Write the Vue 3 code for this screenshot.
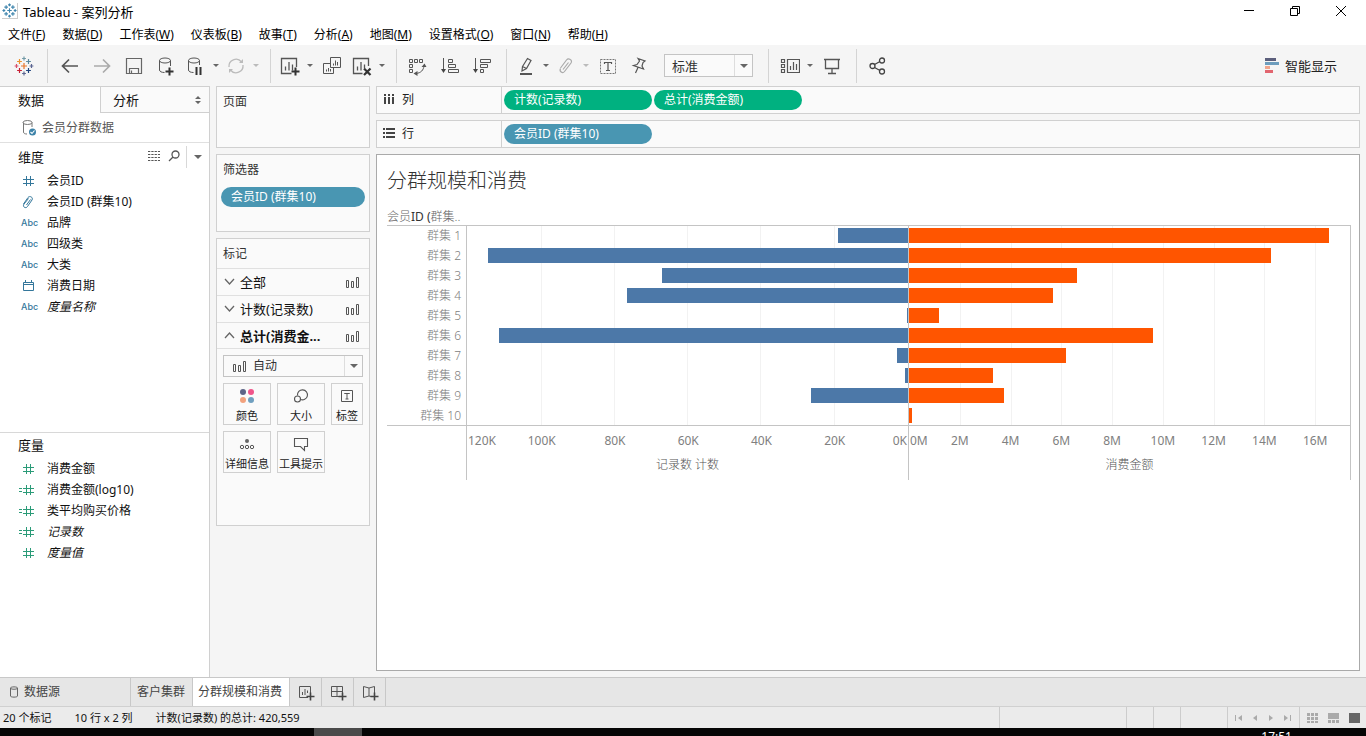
<script setup>
import { ref } from 'vue'

const menus = [
  ['文件', 'F'], ['数据', 'D'], ['工作表', 'W'], ['仪表板', 'B'], ['故事', 'T'],
  ['分析', 'A'], ['地图', 'M'], ['设置格式', 'O'], ['窗口', 'N'], ['帮助', 'H'],
]

// Tableau mark: a set of plus signs, [x, y, arm, colour]
const plusPath = (x, y, r) => `M${x - r} ${y}H${x + r}M${x} ${y - r}V${y + r}`
const pluses = [
  [10, 10, 3, '#e8762b'], [5.5, 5.5, 2.4, '#eb912c'], [14.5, 5.5, 2.4, '#59879b'],
  [5.5, 14.5, 2.4, '#c72035'], [14.5, 14.5, 2.4, '#1f447e'], [10, 2.5, 1.9, '#7199a6'],
  [10, 17.5, 1.9, '#5b6591'], [2.5, 10, 1.9, '#d9506a'], [17.5, 10, 1.9, '#5b6591'],
]

const stroke = (body, color = '#555', width = 1) =>
  `<g fill="none" stroke="${color}" stroke-width="${width}">${body}</g>`

const icons = {
  back: stroke('<path d="M18 10H3M9 3.500L2.500 10L9 16.500"/>', '#555', 1.7),
  forward: stroke('<path d="M2 10H17M11 3.500L17.500 10L11 16.500"/>', '#aaa', 1.7),
  save: stroke('<path d="M2.500 2.500H17.500V17.500H2.500ZM5.500 17.500V12.500H14.500V17.500M7.500 14.500V17.500"/>', '#666', 1.2),
  addData: stroke('<ellipse cx="9" cy="4.500" rx="5.500" ry="2.500"/><path d="M3.500 4.500V14C3.500 15.500 5.500 16.500 8.500 16.500M14.500 4.500V10"/>') + stroke('<path d="M9.500 15.500H17.500M13.500 11.500V19.500"/>', '#333', 2),
  pauseData: stroke('<ellipse cx="8" cy="4.500" rx="5.500" ry="2.500"/><path d="M2.500 4.500V14C2.500 15.500 4.500 16.500 7.500 16.500M13.500 4.500V9"/>') + stroke('<path d="M10.500 11V19M14.500 11V19"/>', '#333', 2),
  refresh: stroke('<path d="M3 11A7 7 0 0 1 15.500 6M17 9A7 7 0 0 1 4.500 14"/>', '#bbb', 1.3) + '<path fill="#bbb" d="M13 7H17V3ZM7 13H3V17Z"/>',
  newSheet: stroke('<path d="M11.500 17.500H1.500V2.500H16.500V11M5.500 14.500V10.500M9 14.500V6M12.500 14.500V8.500" stroke-width="1.300"/>') + stroke('<path d="M11.500 15.500H19.500M15.500 11.500V19.500"/>', '#333', 2),
  dupSheet: stroke('<path d="M8.500 1.500H18.500V11.500H8.500ZM8 7.500H1.500V17.500H11.500V12M11.500 9.500V7.500M13.500 9.500V4.500M15.500 9.500V6M4.500 15.500V13.500M6.500 15.500V12M8.500 15.500V13"/>'),
  clearSheet: stroke('<path d="M10.500 17.500H1.500V2.500H16.500V10M5.500 14.500V10.500M9 14.500V6M12.500 12V8.500" stroke-width="1.300"/>') + stroke('<path d="M12 12.500L18.500 19M18.500 12.500L12 19"/>', '#333', 2.2),
  swap: stroke('<path d="M1.500 3.500H4.500V6.500H1.500ZM6.500 3.500H9.500V6.500H6.500ZM11.500 3.500H14.500V6.500H11.500ZM1.500 8.500H4.500V11.500H1.500ZM1.500 13.500H4.500V16.500H1.500ZM8 17.500C13 17 15.500 14 16 10"/>') + '<path fill="#555" d="M5.500 17.500L9.500 15V20ZM16.500 7.500L13.500 11H18.500Z"/>',
  sortAsc: stroke('<path d="M3.500 2V15M8.500 3.500H12.500V6.500H8.500ZM8.500 8.500H15.500V11.500H8.500ZM8.500 13.500H18.500V16.500H8.500Z"/>') + '<path fill="#444" d="M1 13H6L3.500 17Z"/>',
  sortDesc: stroke('<path d="M3.500 2V15M8.500 3.500H18.500V6.500H8.500ZM8.500 8.500H15.500V11.500H8.500ZM8.500 13.500H11.500V16.500H8.500Z"/>') + '<path fill="#444" d="M1 13H6L3.500 17Z"/>',
  highlight: stroke('<path d="M6.500 10.500L11.500 2.500L15 4.500L10.500 12.500L6 15ZM6.500 10.500L10.500 12.500"/>', '#555', 1.2) + '<path fill="#555" d="M4 17H16V19H4Z"/>',
  clip: stroke('<path d="M4.500 12L10.500 4C12.500 1.500 17 4 15 7L8.500 15.500C6.500 18 3 15.500 4.500 12.500M7 13.500L12.500 6.500"/>', '#aaa', 1.2),
  label: stroke('<path d="M2.500 3.500H17.500V17.500H2.500Z" stroke-dasharray="2 1"/>', '#777') + stroke('<path d="M6.500 8V6.500H13.500V8M10 6.500V14.500M8 14.500H12"/>', '#555', 1.2),
  pin: stroke('<path d="M8 2.500L15 5L13 6.500L12 10L13.500 13L3.500 9.500L7 8.500L9.500 5ZM8 11.500L5.500 17"/>', '#555', 1.2),
  cards: stroke('<path d="M1.500 3.500H4.500V6.500H1.500ZM1.500 8.500H4.500V11.500H1.500ZM1.500 13.500H4.500V16.500H1.500ZM7.500 3.500H19.500V16.500H7.500ZM10.500 14V10M13.500 14V6M16.500 14V8" stroke-width="1.200"/>'),
  present: stroke('<path d="M2 3.500H18M3.500 3.500V12.500H16.500V3.500M10 12.500V17.500M6 17.500H14"/>', '#555', 1.3),
  share: stroke('<circle cx="4.500" cy="10" r="2.500"/><circle cx="14" cy="4.500" r="2.500"/><circle cx="14" cy="15.500" r="2.500"/><path d="M6.500 8.500L12 5.500M6.500 11.500L12 14.500"/>', '#444', 1.3),
  showMe: '<path fill="#5c5f7c" d="M3 2H14V5H3Z"/><path fill="#6d9dbd" d="M3 6H17V9H3Z"/><path fill="#f0a58c" d="M3 10H8V13H3Z"/><path fill="#e2656f" d="M3 14H11V17H3Z"/>',
  source: stroke('<ellipse cx="9.500" cy="4.500" rx="4.500" ry="2"/><path d="M5.500 4.500V14C5.500 15.500 7 16 9 16M14 4.500V9"/>', '#777') + '<circle cx="14.500" cy="14" r="3.500" fill="#3c82a8"/>' + stroke('<path d="M12.500 14L14 15.500L16.500 12.500"/>', '#fff', 1.1),
  list: '<path stroke="#555" stroke-dasharray="2.300 1" d="M4 4.500H16M4 7.500H16M4 10.500H16M4 13.500H16"/>',
  search: stroke('<circle cx="11.500" cy="7.500" r="3.500"/><path d="M9 10L5 14"/>', '#555', 1.3),
  num: stroke('<path d="M8.500 5V15M12.500 5V15M5 8.500H16M5 12.500H16"/>', 'currentColor'),
  calc: stroke('<path d="M8.500 5V15M12.500 5V15M5 8.500H16M5 12.500H16M1 8.500H4M1 11.500H4"/>', 'currentColor'),
  group: stroke('<path d="M5.500 12L10 5.500C11.500 3.500 15.500 5 14 8L9.500 14.500C8 17 4 15 6 12L10.500 6.500M8.500 13L12.500 7.500"/>', 'currentColor'),
  date: stroke('<path d="M5.500 6.500H15.500V14.500H5.500ZM5.500 8.500H15.500M7.500 4V6.500M13.500 4V6.500"/>', 'currentColor'),
  bar: stroke('<path d="M3.500 8.500H5.500V15.500H3.500ZM8.500 9.500H10.500V15.500H8.500ZM13.500 5.500H15.500V15.500H13.500Z"/>'),
  down: stroke('<path d="M6 7L10.500 12L15 7"/>', '#666', 1.3),
  up: stroke('<path d="M6 12L10.500 7L15 12"/>', '#666', 1.3),
  color: '<circle cx="6" cy="6" r="3" fill="#5d6487"/><circle cx="14" cy="6" r="3" fill="#f0558a"/><circle cx="6" cy="14" r="3" fill="#f2a27e"/><circle cx="14" cy="14" r="3" fill="#6f9fbf"/>',
  size: stroke('<path d="M6.500 9.500A5 5 0 1 1 9.500 13.500"/><circle cx="6.500" cy="13" r="3"/>', '#555', 1.1),
  text: stroke('<path d="M4.500 4.500H15.500V15.500H4.500ZM7.500 8V7.500H12.500V8M10 7.500V13M8.500 13H11.500"/>'),
  detail: '<circle cx="10" cy="7" r="2" fill="#666"/>' + stroke('<circle cx="5" cy="13" r="1.700"/><circle cx="10" cy="13" r="1.700"/><circle cx="15" cy="13" r="1.700"/>'),
  tooltip: stroke('<path d="M3.500 4.500H16.500V12.500H13.500V16.500L9.500 12.500H3.500Z"/>', '#555', 1.1),
  cols: '<path fill="#444" d="M5 4h2v2h-2zM5 7h2v7h-2zM9 4h2v2h-2zM9 7h2v7h-2zM13 4h2v2h-2zM13 7h2v7h-2z"/>',
  rows: '<path fill="#444" d="M4 4h2v2h-2zM7 4h9v2h-9zM4 8h2v2h-2zM7 8h9v2h-9zM4 12h2v2h-2zM7 12h9v2h-9z"/>',
  db: stroke('<path d="M6.500 6C6.500 4.500 13.500 4.500 13.500 6V14C13.500 15.500 6.500 15.500 6.500 14ZM6.500 6.500C8 7.500 12 7.500 13.500 6.500"/>', '#666'),
  tabSheet: stroke('<path d="M12 15.500H3.500V4.500H14.500V11M6.500 13V10M9 13V7M11.500 11V8.500"/>') + stroke('<path d="M10.500 14.500H18.500M14.500 10.500V18.500"/>', '#444', 1.6),
  tabDash: stroke('<path d="M12 14.500H3.500V4.500H14.500V11M9 4.500V14.500M3.500 9.500H14.500"/>') + stroke('<path d="M10.500 14.500H18.500M14.500 10.500V18.500"/>', '#444', 1.6),
  tabStory: stroke('<path d="M11 14.500L9 14L3.500 15.500V4.500L9 6L14.500 4.500V11M9 6V14"/>') + stroke('<path d="M10.500 14.500H18.500M14.500 10.500V18.500"/>', '#444', 1.6),
  first: '<path fill="#aaa" d="M6 7h1v6h-1zM13 7v6l-4 -3z"/>',
  prev: '<path fill="#aaa" d="M12 7v6l-4 -3z"/>',
  next: '<path fill="#aaa" d="M8 7v6l4 -3z"/>',
  last: '<path fill="#aaa" d="M13 7h1v6h-1zM7 7v6l4 -3z"/>',
  grid: '<path fill="#aaa" d="M4 5h3v3h-3zM8 5h3v3h-3zM12 5h3v3h-3zM4 9h3v3h-3zM8 9h3v3h-3zM12 9h3v3h-3zM4 13h3v2h-3zM8 13h3v2h-3zM12 13h3v2h-3z"/>',
  film: '<path fill="#aaa" d="M4 5h11v6h-11zM4 12h3v3h-3zM8 12h3v3h-3zM12 12h3v3h-3z"/>',
  full: '<path fill="#666" d="M4 5h11v10h-11z"/>',
}

const tools = [
  { i: 'back', t: '撤消' }, { i: 'forward', t: '重做' }, { i: 'save', t: '保存' }, { i: 'addData', t: '新建数据源' },
  { i: 'pauseData', t: '暂停自动更新', c: 1 }, { i: 'refresh', t: '运行更新', c: 1, off: 1 }, { sep: 1 },
  { i: 'newSheet', t: '新建工作表', c: 1 }, { i: 'dupSheet', t: '复制' }, { i: 'clearSheet', t: '清除工作表', c: 1 }, { sep: 1 },
  { i: 'swap', t: '交换行和列' }, { i: 'sortAsc', t: '升序' }, { i: 'sortDesc', t: '降序' }, { sep: 1 },
  { i: 'highlight', t: '突出显示', c: 1 }, { i: 'clip', t: '组成员', c: 1, off: 1 }, { i: 'label', t: '显示标记标签' }, { i: 'pin', t: '固定轴' },
]
const fit = ref('标准')
const mark = ref('自动')

const dimensions = [
  { i: 'num', n: '会员ID' }, { i: 'group', n: '会员ID (群集10)' }, { n: '品牌' }, { n: '四级类' },
  { n: '大类' }, { i: 'date', n: '消费日期' }, { n: '度量名称', em: 1 },
]
const measures = [
  { i: 'num', n: '消费金额' }, { i: 'calc', n: '消费金额(log10)' }, { i: 'calc', n: '类平均购买价格' },
  { i: 'calc', n: '记录数', em: 1 }, { i: 'num', n: '度量值', em: 1 },
]
const marks = [
  { i: 'color', n: '颜色' }, { i: 'size', n: '大小' }, { i: 'text', n: '标签' },
  { i: 'detail', n: '详细信息' }, { i: 'tooltip', n: '工具提示' },
]

const counts = [19.1, 114.8, 67.1, 76.7, 0.4, 111.6, 3, 0.9, 26.5, 0]
const sales = [16.54, 14.26, 6.63, 5.68, 1.2, 9.62, 6.17, 3.3, 3.73, 0.1]
const countMax = 120.4
const salesMax = 17.37
const countTicks = [100, 80, 60, 40, 20]
const salesTicks = [2, 4, 6, 8, 10, 12, 14, 16]
const pct = (v, max) => `${(v / max) * 100}%`
</script>

<template>
  <div class="app">
    <header class="titlebar">
      <svg class="winlogo" viewBox="0 0 20 20" width="16" height="16">
        <path v-for="(p, k) in pluses" :key="k" :d="plusPath(p[0], p[1], p[2])" stroke="#3f85ad" stroke-width="1.500" />
      </svg>
      <h1>Tableau - 案列分析</h1>
      <div class="wincontrols">
        <button aria-label="最小化"><svg viewBox="0 0 12 12" width="12" height="12"><path d="M1 5.500H11" stroke="#000" /></svg></button>
        <button aria-label="还原"><svg viewBox="0 0 12 12" width="12" height="12"><path d="M1.500 3.500H8.500V10.500H1.500ZM3.500 3.500V1.500H10.500V8.500H8.500" fill="none" stroke="#000" /></svg></button>
        <button aria-label="关闭"><svg viewBox="0 0 12 12" width="12" height="12"><path d="M1 1L11 11M11 1L1 11" stroke="#000" /></svg></button>
      </div>
    </header>

    <nav class="menubar">
      <button v-for="m in menus" :key="m[1]">{{ m[0] }}(<u>{{ m[1] }}</u>)</button>
    </nav>

    <div class="toolbar">
      <button class="tool brand" aria-label="开始页面">
        <svg viewBox="0 0 20 20" width="20" height="20">
          <path v-for="(p, k) in pluses" :key="k" :d="plusPath(p[0], p[1], p[2])" :stroke="p[3]" stroke-width="1.200" />
        </svg>
      </button>
      <span class="sep start"></span>
      <template v-for="(t, k) in tools" :key="k">
        <span v-if="t.sep" class="sep"></span>
        <template v-else>
          <button class="tool" :class="{ split: t.c }" :aria-label="t.t"><svg class="ico" viewBox="0 0 20 20" v-html="icons[t.i]"></svg></button>
          <button v-if="t.c" class="caretbtn" :class="{ off: t.off }" :aria-label="t.t + '选项'"><i class="caret"></i></button>
        </template>
      </template>
      <div class="select fit">
        <select v-model="fit" aria-label="适合"><option>标准</option><option>适合宽度</option></select>
        <span class="arrow"><i class="caret big"></i></span>
      </div>
      <span class="sep wide"></span>
      <button class="tool split" aria-label="显示/隐藏卡"><svg class="ico" viewBox="0 0 20 20" v-html="icons.cards"></svg></button>
      <button class="caretbtn" aria-label="卡选项"><i class="caret"></i></button>
      <button class="tool" aria-label="演示模式"><svg class="ico" viewBox="0 0 20 20" v-html="icons.present"></svg></button>
      <span class="sep"></span>
      <button class="tool" aria-label="共享"><svg class="ico" viewBox="0 0 20 20" v-html="icons.share"></svg></button>
      <button class="showme"><svg class="ico" viewBox="0 0 20 20" v-html="icons.showMe"></svg>智能显示</button>
    </div>

    <main class="work">
      <aside class="data">
        <div class="panetabs">
          <button class="on">数据</button>
          <button>分析<svg viewBox="0 0 6 8" width="6" height="8"><path fill="#666" d="M0 3L3 0L6 3ZM0 5L3 8L6 5Z" /></svg></button>
        </div>
        <button class="source"><svg class="ico" viewBox="0 0 20 20" v-html="icons.source"></svg>会员分群数据</button>
        <section class="dims">
          <div class="sechead">
            <h2>维度</h2>
            <button aria-label="查看数据"><svg class="ico" viewBox="0 0 20 20" v-html="icons.list"></svg></button>
            <button aria-label="查找字段"><svg class="ico" viewBox="0 0 20 20" v-html="icons.search"></svg></button>
            <button class="more" aria-label="菜单"><i class="caret big"></i></button>
          </div>
          <ul class="fields blue">
            <li v-for="f in dimensions" :key="f.n">
              <svg v-if="f.i" class="ico" viewBox="0 0 20 20" v-html="icons[f.i]"></svg>
              <b v-else>Abc</b>
              <span :class="{ em: f.em }">{{ f.n }}</span>
            </li>
          </ul>
        </section>
        <section class="meas">
          <div class="sechead"><h2>度量</h2></div>
          <ul class="fields green">
            <li v-for="f in measures" :key="f.n">
              <svg class="ico" viewBox="0 0 20 20" v-html="icons[f.i]"></svg>
              <span :class="{ em: f.em }">{{ f.n }}</span>
            </li>
          </ul>
        </section>
      </aside>

      <aside class="cardcol">
        <section class="card pages"><h3>页面</h3></section>
        <section class="card filters">
          <h3>筛选器</h3>
          <button class="pill">会员ID (群集10)</button>
        </section>
        <section class="card marks">
          <h3>标记</h3>
          <button class="markrow"><svg class="ico" viewBox="0 0 20 20" v-html="icons.down"></svg><span>全部</span><svg class="ico" viewBox="0 0 20 20" v-html="icons.bar"></svg></button>
          <button class="markrow"><svg class="ico" viewBox="0 0 20 20" v-html="icons.down"></svg><span>计数(记录数)</span><svg class="ico" viewBox="0 0 20 20" v-html="icons.bar"></svg></button>
          <button class="markrow cur"><svg class="ico" viewBox="0 0 20 20" v-html="icons.up"></svg><span>总计(消费金...</span><svg class="ico" viewBox="0 0 20 20" v-html="icons.bar"></svg></button>
          <div class="select marktype">
            <svg class="ico" viewBox="0 0 20 20" v-html="icons.bar"></svg>
            <select v-model="mark" aria-label="标记类型"><option>自动</option><option>条形图</option></select>
            <span class="arrow"><i class="caret big"></i></span>
          </div>
          <div class="markgrid">
            <button v-for="m in marks" :key="m.n"><svg class="ico" viewBox="0 0 20 20" v-html="icons[m.i]"></svg><span>{{ m.n }}</span></button>
          </div>
        </section>
      </aside>

      <div class="sheet">
        <div class="shelf">
          <div class="shelfname"><svg class="ico" viewBox="0 0 20 20" v-html="icons.cols"></svg>列</div>
          <button class="pill measure">计数(记录数)</button>
          <button class="pill measure">总计(消费金额)</button>
        </div>
        <div class="shelf">
          <div class="shelfname"><svg class="ico" viewBox="0 0 20 20" v-html="icons.rows"></svg>行</div>
          <button class="pill">会员ID (群集10)</button>
        </div>
        <section class="view">
          <h2>分群规模和消费</h2>
          <p class="rowhead">会员<b>ID (</b>群集..</p>
          <div class="chart">
            <div class="labels">
              <div v-for="n in 10" :key="n">群集 {{ n }}</div>
            </div>
            <div class="plot left">
              <i v-for="t in countTicks" :key="t" class="gl" :style="{ right: pct(t, countMax) }"></i>
              <div v-for="(v, k) in counts" :key="k" class="row"><div class="bar" :style="{ width: pct(v, countMax) }"></div></div>
            </div>
            <div class="plot right">
              <i v-for="t in salesTicks" :key="t" class="gl" :style="{ left: pct(t, salesMax) }"></i>
              <div v-for="(v, k) in sales" :key="k" class="row"><div class="bar" :style="{ width: pct(v, salesMax) }"></div></div>
            </div>
            <div class="corner"></div>
            <div class="axis">
              <div class="ticks">
                <span class="start">120K</span>
                <span v-for="t in countTicks" :key="t" class="mid" :style="{ left: pct(countMax - t, countMax) }">{{ t }}K</span>
                <span class="end">0K</span>
              </div>
              <div class="axtitle">记录数 计数</div>
            </div>
            <div class="axis last">
              <div class="ticks">
                <span class="start">0M</span>
                <span v-for="t in salesTicks" :key="t" class="mid" :style="{ left: pct(t, salesMax) }">{{ t }}M</span>
              </div>
              <div class="axtitle">消费金额</div>
            </div>
          </div>
        </section>
      </div>
    </main>

    <nav class="sheettabs">
      <button class="ds"><svg class="ico" viewBox="0 0 20 20" v-html="icons.db"></svg>数据源</button>
      <button>客户集群</button>
      <button class="on">分群规模和消费</button>
      <button class="add" aria-label="新建工作表"><svg class="ico" viewBox="0 0 20 20" v-html="icons.tabSheet"></svg></button>
      <button class="add" aria-label="新建仪表板"><svg class="ico" viewBox="0 0 20 20" v-html="icons.tabDash"></svg></button>
      <button class="add" aria-label="新建故事"><svg class="ico" viewBox="0 0 20 20" v-html="icons.tabStory"></svg></button>
    </nav>

    <footer class="status">
      <span>20 个标记</span><span>10 行 x 2 列</span><span>计数(记录数) 的总计: 420,559</span>
      <i class="cell first"></i><i class="cell"></i><i class="cell"></i><i class="cell user"></i>
      <div class="pager">
        <button v-for="n in ['first', 'prev', 'next', 'last']" :key="n" :aria-label="n"><svg class="ico" viewBox="0 0 20 20" v-html="icons[n]"></svg></button>
      </div>
      <div class="modes">
        <button v-for="n in ['grid', 'film', 'full']" :key="n" :aria-label="n"><svg class="ico" viewBox="0 0 20 20" v-html="icons[n]"></svg></button>
      </div>
    </footer>
    <div class="taskbar"><i></i><time>17:51</time></div>
  </div>
</template>

<style>
body { margin: 0; }
</style>

<style scoped>
.app {
  display: flex; flex-direction: column; min-height: 100vh; background: #f5f5f5; color: #222;
  font: 12px/16px "Noto Sans", "Noto Sans CJK SC", sans-serif;
}
.app *, .app *::before { box-sizing: border-box; }
button { font: inherit; color: inherit; background: none; border: 0; padding: 0; margin: 0; display: flex; align-items: center; }
h1, h2, h3, p, ul { margin: 0; padding: 0; font-weight: 400; }
ul { list-style: none; }
.ico { width: 20px; height: 20px; flex: none; display: block; }
.caret { width: 0; height: 0; border: 3px solid transparent; border-top: 3px solid #666; border-bottom: 0; }
.caret.big { border-width: 4px 4px 0; }
.off .caret { border-top-color: #bbb; }

.titlebar { display: flex; align-items: center; height: 22px; background: #fff; padding-left: 2px; color: #000; }
.titlebar h1 { flex: 1; font-size: 13px; margin-left: 5px; padding-top: 1px; }
.winlogo { border-right: 1px solid #ccc; border-bottom: 1px solid #ccc; }
.wincontrols { display: flex; padding-right: 2px; }
.wincontrols button { width: 46px; height: 22px; justify-content: center; }

.menubar { display: flex; gap: 17px; height: 23px; padding: 3px 8px 0; background: #fff; color: #000; }
.menubar button { display: block; white-space: nowrap; }

.toolbar { display: flex; align-items: center; height: 41px; }
.tool { width: 32px; height: 32px; justify-content: center; }
.tool.split { width: 28px; }
.tool.brand { width: 31px; margin-left: 8px; }
.caretbtn { width: 12px; height: 32px; justify-content: center; }
.sep { width: 1px; height: 34px; margin: 0 5px 0 8px; background: #d4d4d4; }
.sep.start { margin-right: 6px; }
.sep.wide { margin: 0 7px 0 15px; }
.select { display: flex; align-items: center; height: 23px; border: 1px solid #c4c4c4; background: #fafafa; }
.select select { flex: 1; min-width: 0; height: 100%; appearance: none; border: 0; background: none; padding: 0 7px; font: inherit; color: #333; }
.arrow { width: 18px; height: 100%; display: flex; align-items: center; justify-content: center; border-left: 1px solid #ddd; }
.fit { width: 89px; margin-left: 8px; font-size: 13px; }
.showme { margin: 0 29px 0 auto; gap: 3px; font-size: 13px; }

.work { flex: 1; display: flex; }
.data { width: 210px; display: flex; flex-direction: column; background: #fff; border-right: 1px solid #d0d0d0; border-top: 1px solid #d0d0d0; color: #111; }
.panetabs { display: flex; height: 26px; }
.panetabs button { flex: 1; font-size: 13px; justify-content: space-between; padding: 0 8px 0 12px; background: #fafafa; border-left: 1px solid #d0d0d0; border-bottom: 1px solid #d0d0d0; }
.panetabs .on { flex: none; width: 100px; padding-left: 18px; background: #fff; border: 0; }
.source { height: 30px; gap: 4px; padding-left: 18px; color: #555; border-bottom: 1px solid #e0e0e0; }
.dims { flex: 1 1 auto; }
.sechead { display: flex; align-items: center; height: 27px; padding-left: 18px; }
.sechead h2 { flex: 1; font-size: 13px; }
.sechead .more { width: 23px; height: 22px; justify-content: center; border-left: 1px solid #d8d8d8; margin-left: 2px; }
.fields li { display: flex; align-items: center; height: 21px; padding-left: 18px; }
.fields b { width: 20px; font: 500 9px/16px Inter, "Liberation Sans", sans-serif; padding-left: 3px; }
.fields span { margin-left: 9px; }
.fields .em { font-style: italic; }
.blue .ico, .blue b { color: #34779b; }
.green .ico { color: #2b9b78; }
.meas { height: 245px; border-top: 1px solid #d8d8d8; }
.meas .sechead { height: 25px; padding-bottom: 2px; }

.cardcol { width: 154px; margin: 0 6px; display: flex; flex-direction: column; gap: 6px; }
.card { background: #fafafa; border: 1px solid #d0d0d0; color: #333; }
.card h3 { font-size: 12px; padding: 7px 6px 0; height: 30px; }
.pages { height: 62px; }
.filters { height: 78px; }
.filters .pill { width: 144px; margin: 2px 0 0 4px; }
.marks { height: 288px; }
.pill { width: 148px; height: 20px; border-radius: 10px; padding: 0 10px; background: #4996b2; color: #fff; white-space: nowrap; }
.pill.measure { background: #00b180; }
.marks h3 { height: 29px; }
.markrow { width: 100%; height: 27px; padding: 0 6px 0 2px; border-top: 1px solid #e0e0e0; font-size: 13px; color: #111; }
.markrow span { flex: 1; text-align: left; margin-left: 1px; }
.markrow.cur { border-bottom: 1px solid #e0e0e0; font-weight: 700; }
.marktype { margin: 6px; height: 22px; padding-left: 6px; }
.marktype select { padding: 0 3px; }
.markgrid { display: grid; grid-template-columns: 48px 48px 32px; gap: 6px; padding: 0 6px; }
.markgrid button { flex-direction: column; height: 42px; padding-top: 2px; border: 1px solid #d0d0d0; gap: 2px; white-space: nowrap; font-size: 11px; color: #222; }

.sheet { flex: 1; min-width: 0; display: flex; flex-direction: column; gap: 6px; margin-right: 6px; }
.shelf { display: flex; align-items: center; gap: 2px; height: 28px; border: 1px solid #d0d0d0; background: #fafafa; }
.shelfname { width: 125px; height: 100%; display: flex; align-items: center; gap: 3px; padding-left: 2px; border-right: 1px solid #d0d0d0; }
.view { flex: 1; margin-bottom: 6px; padding: 12px 8px 0 10px; background: #fff; border: 1px solid #aaa; }
.view h2 { font-size: 20px; line-height: 28px; font-weight: 300; color: #333; }
.rowhead { line-height: 16px; margin-top: 14px; color: #666; font-weight: 300; }
.rowhead b { font-weight: 400; color: #333; }
.chart { display: grid; grid-template-columns: 79px 441fr 442fr; border-top: 1px solid #c4c4c4; color: #808080; }
.labels, .plot { height: 200px; }
.labels { text-align: right; padding-right: 5px; font-weight: 300; border-bottom: 1px solid #c4c4c4; }
.labels div { height: 20px; line-height: 20px; }
.plot { position: relative; border-left: 1px solid #c4c4c4; border-bottom: 1px solid #c4c4c4; }
.plot.right, .axis.last { border-right: 1px solid #c4c4c4; }
.gl { position: absolute; top: 0; bottom: 0; width: 1px; background: #f2f2f2; }
.row { position: relative; display: flex; height: 20px; padding-top: 2px; }
.left .row { justify-content: flex-end; }
.bar { height: 15px; background: #4c78a8; }
.right .bar { background: #ff5500; }
.axis { border-left: 1px solid #c4c4c4; height: 54px; }
.ticks { position: relative; height: 31px; line-height: 30px; }
.ticks span { position: absolute; top: 0; }
.start { left: 1px; }
.end { right: 1px; }
.mid { transform: translateX(-50%); }
.axtitle { text-align: center; color: #555; font-weight: 300; }

.sheettabs { display: flex; height: 30px; background: #e6e6e6; border-top: 1px solid #c8c8c8; border-bottom: 1px solid #d0d0d0; color: #444; }
.sheettabs button { padding: 0 7px 0 6px; border-right: 1px solid #c8c8c8; white-space: nowrap; }
.sheettabs .ds { width: 131px; padding-left: 4px; }
.sheettabs .on { background: #fff; padding-left: 5px; }
.sheettabs .add { width: 32px; justify-content: center; padding: 0; }

.status { display: flex; align-items: center; height: 21px; padding-left: 3px; gap: 23px; background: #ebebeb; color: #111; white-space: nowrap; font-size: 11px; }
.cell { width: 27px; height: 100%; border-left: 1px solid #ccc; margin-left: -23px; }
.cell.first { width: 127px; margin-left: auto; }
.cell.user { width: 47px; }
.pager, .modes { display: flex; align-items: center; height: 100%; border-left: 1px solid #ccc; margin-left: -23px; }
.pager { width: 72px; padding-left: 3px; }
.pager button { width: 16px; justify-content: center; }
.modes { width: 67px; padding-left: 2px; }
.modes button { width: 21px; justify-content: center; }
.taskbar { display: flex; height: 8px; overflow: hidden; background: #050505; color: #fff; }
.taskbar i { width: 48px; margin-left: 314px; background: #4a4a4a; }
.taskbar time { margin: 1px 74px 0 auto; }
</style>
